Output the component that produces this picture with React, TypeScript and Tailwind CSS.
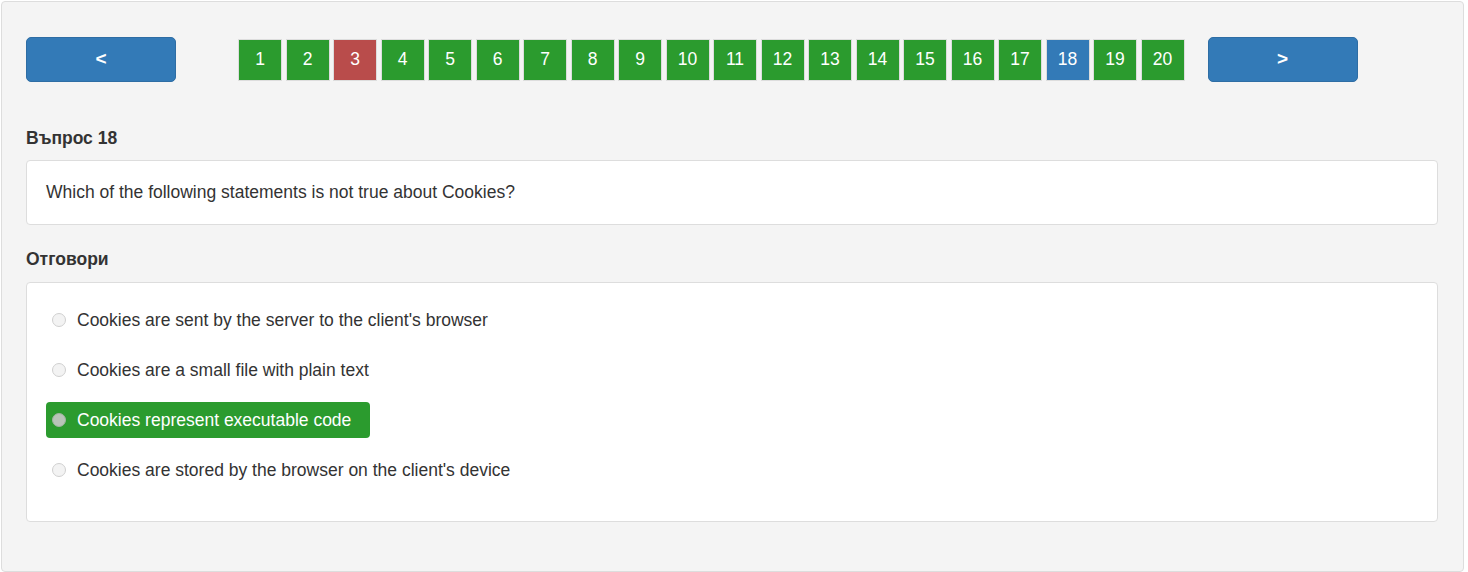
import React, { useState } from 'react';

const TOTAL = 20;
const WRONG = [3];
const CURRENT = 18;

const ANSWERS = [
  "Cookies are sent by the server to the client's browser",
  'Cookies are a small file with plain text',
  'Cookies represent executable code',
  "Cookies are stored by the browser on the client's device",
];

const NavButton: React.FC<{ label: string }> = ({ label }) => (
  <button className="w-[150px] h-[45px] rounded-[5px] bg-[#337ab7] border border-[#2e6da4] text-white text-[19px] font-bold">
    {label}
  </button>
);

export default function App() {
  const [selected, setSelected] = useState(2);

  const boxColor = (n: number) => {
    if (n === CURRENT) return 'bg-[#337ab7]';
    if (WRONG.includes(n)) return 'bg-[#b94c4b]';
    return 'bg-[#2b9b2e]';
  };

  return (
    <div className="w-[1468px] h-[572px] bg-white pt-[1px] pl-[1px] font-['Liberation_Sans',Arial,sans-serif] text-[#333]">
      <div className="w-[1463px] h-[571px] bg-[#f4f4f4] border border-[#dddddd] rounded-[4px] pl-[24px] pt-[35px]">
        {/* pager */}
        <div className="flex items-center">
          <NavButton label="<" />
          <div className="flex items-center gap-[3.5px] ml-[62px] mr-[23px]">
            {Array.from({ length: TOTAL }, (_, i) => i + 1).map((n) => (
              <div
                key={n}
                className={`w-[44px] h-[42px] border border-[#dddddd] flex items-center justify-center text-white text-[17.5px] ${boxColor(n)}`}
              >
                {n}
              </div>
            ))}
          </div>
          <NavButton label=">" />
        </div>

        <h3 className="mt-[45px] text-[17.5px] font-bold leading-[22px]">Въпрос 18</h3>
        <div className="mt-[11px] w-[1412px] h-[65px] bg-white border border-[#dddddd] rounded-[4px] flex items-center px-[19px] text-[17.5px]">
          Which of the following statements is not true about Cookies?
        </div>

        <h3 className="mt-[23px] text-[17.5px] font-bold leading-[22px]">Отговори</h3>
        <div className="mt-[12px] w-[1412px] h-[240px] bg-white border border-[#dddddd] rounded-[4px] px-[19px] pt-[19px]">
          <div className="flex flex-col gap-[14px]">
            {ANSWERS.map((a, i) => {
              const active = i === selected;
              return (
                <label
                  key={i}
                  onClick={() => setSelected(i)}
                  className={`self-start flex items-center h-[36px] pl-[6px] pr-[19px] rounded-[4px] text-[17.5px] cursor-pointer ${
                    active ? 'bg-[#2b9b2e] text-white' : ''
                  }`}
                >
                  <span
                    className={`w-[14px] h-[14px] rounded-full border mr-[11px] ${
                      active ? 'bg-[#b8c4b8] border-[#9fb49f]' : 'bg-[#f3f3f3] border-[#d0d0d0]'
                    }`}
                  />
                  {a}
                </label>
              );
            })}
          </div>
        </div>
      </div>
    </div>
  );
}
